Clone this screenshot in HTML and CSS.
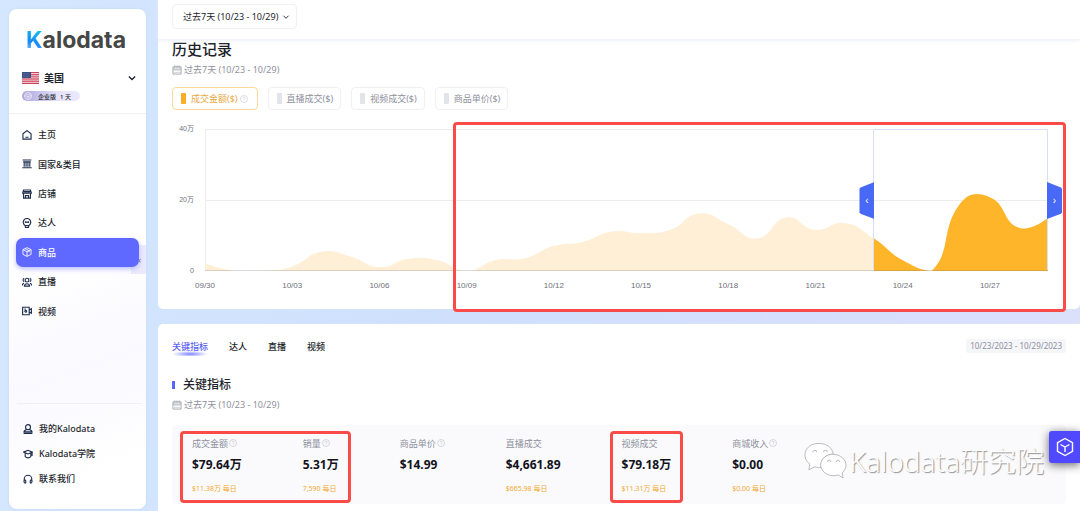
FILE: index.html
```html
<!DOCTYPE html>
<html lang="zh-CN">
<head>
    <meta charset="UTF-8">
    <meta name="viewport" content="width=device-width, initial-scale=1.0">
    <title>Kalodata</title>
    <link rel="stylesheet" href="styles.css">
</head>
<body>
    <svg class="defs" width="0" height="0">
        <symbol id="help" viewBox="0 0 16 16"><circle cx="8" cy="8" r="7"/><path d="M6 6.4a2 2 0 1 1 2.8 1.8c-.6.3-.8.6-.8 1.3M8 11.2v1"/></symbol>
        <symbol id="calendar" viewBox="0 0 16 16"><path d="M1.500 3h13v11.500h-13zM1.500 6.500h13M4.500 .8v3.500M8 .8v3.500M11.500 .8v3.500M4 9h1.500M7.200 9h1.500M10.500 9h1.500M4 12h1.500M7.200 12h1.500M10.500 12h1.500"/></symbol>
        <symbol id="chevron" viewBox="0 0 16 16"><path d="M3 5.500l5 5 5-5"/></symbol>
        <symbol id="box" viewBox="0 0 16 16"><path d="M8 1l6.500 3.200v7.600L8 15l-6.500-3.200V4.200zM1.500 4.200L8 7.500l6.500-3.300M8 7.500V15M4.800 2.600l6.500 3.300v2.600"/></symbol>
    </svg>

    <aside class="sidebar">
        <a class="logo" href="#"><span class="logo-k">K</span>alodata</a>
        <label class="country">
            <svg class="flag" viewBox="0 0 17 12">
                <rect width="17" height="12" fill="#f5e3e8"/>
                <path d="M0 .5h17M0 2.400h17M0 4.200h17M0 6.100h17M0 7.900h17M0 9.700h17M0 11.500h17" stroke="#cf4058"/>
                <rect width="9" height="6" fill="#3b4f84"/>
                <path d="M1 1.500h7M1 3h7M1 4.500h7" stroke="#8f9dc2" stroke-width=".5" stroke-dasharray=".6 .8"/>
            </svg>
            <select><option>美国</option></select>
            <svg class="icon chevron"><use href="#chevron"/></svg>
        </label>
        <div class="plan">
            <svg class="icon" viewBox="0 0 16 16"><circle cx="8" cy="8" r="7"/><path d="M4.500 5.500h7L13 8l-5 5-5-5zM6 8l2 2 2-2"/></svg>
            <span>企业版</span><span>1 天</span>
        </div>
        <nav class="nav">
            <a href="#"><svg class="icon" viewBox="0 0 16 16"><path d="M1.500 6L8 1l6.500 5v8.500h-13zM5.500 11.500h5"/></svg>主页</a>
            <a href="#"><svg class="icon" viewBox="0 0 16 16"><path d="M1 1.500h14M2 4.500h12M3.500 4.500v8M6.500 4.500v8M9.500 4.500v8M12.500 4.500v8M.5 14h15"/></svg>国家&amp;类目</a>
            <a href="#"><svg class="icon" viewBox="0 0 16 16"><path d="M2.500 1.500h11l1.500 5H1zM1 4h14M2.500 7.500v7h11v-7M5 4v3.500M8 4v3.500M11 4v3.500M5.500 14v-3.500h5V14"/></svg>店铺</a>
            <a href="#"><svg class="icon" viewBox="0 0 16 16"><path d="M5 12a6 6 0 1 1 6 0L10.500 15h-5zM5 12h6M5 6.500h6M5.500 5v3M10.500 5v3"/></svg>达人</a>
            <a class="active" href="#"><svg class="icon"><use href="#box"/></svg>商品</a>
            <a href="#"><svg class="icon" viewBox="0 0 16 16"><circle cx="8" cy="5" r="3"/><path d="M3.500 2a3 3 0 0 0 0 5.500M12.500 2a3 3 0 0 1 0 5.500M4 14.500c0-5 8-5 8 0zM.8 13.500c0-2 1-3.500 2.500-3.500M15.200 13.500c0-2-1-3.500-2.500-3.500"/></svg>直播</a>
            <a href="#"><svg class="icon" viewBox="0 0 16 16"><path d="M1 2h10.500v12H1zM11.500 6.500L15 4.500v7l-3.500-2M4 5h2"/><circle cx="6" cy="8.500" r="1.500"/></svg>视频</a>
        </nav>
        <nav class="nav-bottom">
            <a href="#"><svg class="icon" viewBox="0 0 16 16"><circle cx="8" cy="5" r="4"/><path d="M5.500 9C3 10 1.500 11.500 1.500 12.500h13C14.500 11.500 13 10 10.500 9M1 15h14"/></svg>我的Kalodata</a>
            <a href="#"><svg class="icon" viewBox="0 0 16 16"><path d="M.8 5L8 2l7.200 3L8 8zM3.500 6.500V12c2 3 7 3 9 0V6.500M14.500 5.500V11"/></svg>Kalodata学院</a>
            <a href="#"><svg class="icon" viewBox="0 0 16 16"><path d="M2 11V8a6 6 0 0 1 12 0v3M2 9.500c3-1 3 5 1.500 5S1 12 2 9.500zM14 9.500c-3-1-3 5-1.500 5S15 12 14 9.500z"/></svg>联系我们</a>
        </nav>
        <button class="collapse" aria-label="收起">‹</button>
    </aside>

    <main class="main">
        <header class="topbar">
            <label class="range">
                <select><option>过去7天 (10/23 - 10/29)</option></select>
                <svg class="icon chevron"><use href="#chevron"/></svg>
            </label>
        </header>

        <section class="card history">
            <h2>历史记录</h2>
            <p class="period"><svg class="icon"><use href="#calendar"/></svg>过去7天 (10/23 - 10/29)</p>
            <div class="series">
                <button class="on"><i></i>成交金额($)<svg class="icon"><use href="#help"/></svg></button>
                <button><i></i>直播成交($)</button>
                <button><i></i>视频成交($)</button>
                <button><i></i>商品单价($)</button>
            </div>
            <div class="chart">
                <div class="y-axis"><span>40万</span><span>20万</span><span>0</span></div>
                <div class="plot-col">
                    <div class="plot">
                        <svg id="plot" viewBox="0 0 843 142" preserveAspectRatio="none">
                            <clipPath id="picked"><rect x="669" y="0" width="174" height="142"/></clipPath>
                            <path class="grid" d="M-5 .5H843M-5 71.500H843M.5 0V142"/>
                            <path class="area" id="area"/>
                            <path class="area-picked" id="areaPicked" clip-path="url(#picked)"/>
                            <path class="axis" d="M-5 141.500H843"/>
                        </svg>
                        <div class="brush">
                            <button class="handle left" aria-label="开始">‹</button>
                            <button class="handle right" aria-label="结束">›</button>
                        </div>
                    </div>
                    <div class="x-axis">
                        <span>09/30</span><span>10/03</span><span>10/06</span><span>10/09</span><span>10/12</span><span>10/15</span><span>10/18</span><span>10/21</span><span>10/24</span><span>10/27</span>
                    </div>
                    <div class="mark"></div>
                </div>
            </div>
        </section>

        <section class="card detail">
            <div class="tabs">
                <button class="on">关键指标</button>
                <button>达人</button>
                <button>直播</button>
                <button>视频</button>
                <span class="dates">10/23/2023 - 10/29/2023</span>
            </div>
            <h3>关键指标</h3>
            <p class="period"><svg class="icon"><use href="#calendar"/></svg>过去7天 (10/23 - 10/29)</p>
            <div class="metrics">
                <div class="group">
                    <div class="metric"><span>成交金额<svg class="icon"><use href="#help"/></svg></span><b>$79.64万</b><small>$11.38万 每日</small></div>
                    <div class="metric"><span>销量<svg class="icon"><use href="#help"/></svg></span><b>5.31万</b><small>7,590 每日</small></div>
                    <div class="mark"></div>
                </div>
                <div class="metric"><span>商品单价<svg class="icon"><use href="#help"/></svg></span><b>$14.99</b></div>
                <div class="metric"><span>直播成交</span><b>$4,661.89</b><small>$665.98 每日</small></div>
                <div class="group">
                    <div class="metric"><span>视频成交</span><b>$79.18万</b><small>$11.31万 每日</small></div>
                    <div class="mark"></div>
                </div>
                <div class="metric"><span>商城收入<svg class="icon"><use href="#help"/></svg></span><b>$0.00</b><small>$0.00 每日</small></div>
                <div class="watermark">
                    <svg viewBox="0 0 44 38">
                        <path d="M15 1C7 1 1 6 1 13c0 4 2 7 5 9l-1 6 6-3c2 .5 5 .8 7 .4C16 17 23 12 30 12 29 5 23 1 15 1z"/>
                        <path d="M30 12c-7 0-13 5-13 11s6 11 13 11c2 0 3 0 5-.7l5 3-1-5c2-2 4-5 4-8 0-6-6-11-13-11z"/>
                        <path d="M9 10a2 2 0 0 1 4 0M20 10a2 2 0 0 1 4 0M24 20a1.800 1.800 0 0 1 3.600 0M33 20a1.800 1.800 0 0 1 3.600 0"/>
                    </svg>
                    <span>Kalodata研究院</span>
                </div>
            </div>
        </section>
    </main>

    <button class="float-btn" aria-label="工具">
        <svg viewBox="0 0 20 20"><path d="M10 1.500l7.500 4.200v8.600L10 18.500l-7.500-4.200V5.700zM5.500 7.500L10 10l4.500-2.500M10 10v5"/></svg>
    </button>

    <script src="chart.js"></script>
</body>
</html>
```

FILE: styles.css
```css
* {
    box-sizing: border-box;
}
body {
    margin: 0;
    height: 100vh;
    overflow: hidden;
    display: flex;
    gap: 12px;
    padding-left: 9px;
    background: linear-gradient(90deg, #d4e7fe, #cfe0fc 40%, #dbe0fb);
    font-family: "Noto Sans", "Noto Sans CJK SC", sans-serif;
    font-size: 9px;
    color: #1d1f2b;
}
h2, h3, p {
    margin: 0;
}
a {
    color: inherit;
    text-decoration: none;
}
button, select {
    font: inherit;
    color: inherit;
    border: none;
    background: none;
    padding: 0;
    cursor: pointer;
}
select {
    appearance: none;
    width: 100%;
}
.defs {
    position: absolute;
}
.icon {
    width: 10px;
    height: 10px;
    flex: none;
    fill: none;
    stroke: currentColor;
    stroke-width: 1.5;
}

/* sidebar */
.sidebar {
    position: relative;
    flex: none;
    width: 137px;
    margin: 9px 0 2px;
    border-radius: 8px;
    background: linear-gradient(160deg, #fff 50%, #f9f9ff 70%, #fff 90%);
    box-shadow: 0 0 3px #c3d8f4;
    display: flex;
    flex-direction: column;
}
.logo {
    margin: 18px 17px 0;
    font: bold 23px/27px Inter, sans-serif;
    color: #454747;
}
.logo-k {
    background: linear-gradient(200deg, #08dbe0, #1787fb 60%, #a9cffc);
    background-clip: text;
    color: transparent;
}
.country {
    display: flex;
    align-items: center;
    gap: 5px;
    margin: 15px 9px 0 13px;
    height: 18px;
    font-size: 10px;
    font-weight: bold;
}
.country .chevron {
    stroke-width: 2;
}
.flag {
    flex: none;
    width: 17px;
    height: 12px;
}
.plan {
    display: flex;
    align-items: center;
    gap: 4px;
    width: 58px;
    height: 10px;
    margin: 4px 13px 12px;
    padding-left: 2px;
    border-radius: 5px;
    background: linear-gradient(90deg, #aaa5dc, #e5e2fa 60%, #ebe9fc);
    font-size: 6px;
    font-weight: 500;
}
.plan .icon {
    width: 8px;
    height: 8px;
    margin-right: 2px;
    color: #f3f2ff;
}
.nav {
    border-top: 1px solid #f0f1f5;
    padding: 6px 7px 0;
    display: grid;
    grid-auto-rows: 1fr;
    min-height: 213px;
}
.nav a, .nav-bottom a {
    display: flex;
    align-items: center;
    gap: 6px;
    padding-left: 6px;
    font-weight: 500;
}
.nav .icon, .nav-bottom .icon {
    color: #1e2d4d;
    stroke-width: 1.8;
}
.nav .active {
    color: #fff;
    background: #6069ff;
    border-radius: 7px;
    box-shadow: 0 2px 5px #b9bcff;
    z-index: 1;
}
.nav .active .icon {
    color: #fff;
    stroke-width: 1.4;
}
.nav-bottom {
    margin: auto 4px 18px 8px;
    border-top: 1px solid #eff0f5;
    padding-top: 12px;
}
.nav-bottom a {
    height: 25px;
}
.collapse {
    position: absolute;
    right: 0;
    top: 236px;
    width: 15px;
    height: 29px;
    text-align: right;
    padding-right: 5px;
    background: #eae9fd;
}

/* main column */
.main {
    flex: 1;
    min-width: 0;
    display: flex;
    flex-direction: column;
}
.topbar {
    position: relative;
    padding: 4px 14px 10px;
    background: #fff;
    box-shadow: 0 1px 4px #e6e9fb;
}
.range {
    display: inline-flex;
    align-items: center;
    gap: 3px;
    height: 25px;
    padding: 0 6px 0 10px;
    border: 1px solid #eff0f4;
    border-radius: 4px;
    vertical-align: top;
}
.range .icon {
    width: 8px;
    height: 8px;
    stroke-width: 1.8;
}
.card {
    padding: 0 14px;
    background: #fff;
}
.history {
    padding-bottom: 18px;
    border-radius: 0 0 5px 5px;
}
h2 {
    font-size: 15px;
    line-height: 21px;
    font-weight: 500;
}
.period {
    display: flex;
    align-items: center;
    gap: 2px;
    height: 19px;
    color: #8e909c;
}
.period .icon {
    stroke-width: 1.2;
}
.series {
    display: flex;
    gap: 10px;
    margin-top: 8px;
    color: #8e909c;
}
.series button {
    display: flex;
    align-items: center;
    height: 23px;
    padding: 0 7px 0 8px;
    border: 1px solid #eff0f3;
    border-radius: 4px;
}
.series i {
    width: 5px;
    height: 11px;
    margin-right: 5px;
    border-radius: 1px;
    background: #e3e4ea;
}
.series .on {
    padding-right: 9px;
    color: #e9a944;
    border-color: #fbd998;
}
.series .on i {
    background: #fbae25;
}
.series .icon {
    width: 8px;
    height: 8px;
    margin-left: 2px;
    color: #c4c6ce;
    stroke-width: 1.2;
}

/* chart */
.chart {
    display: flex;
    gap: 11px;
    margin: 19px 18px 0 0;
    font: 8px/10px "Liberation Sans", "Noto Sans CJK SC", sans-serif;
    color: #6e7079;
}
.y-axis {
    width: 22px;
    height: 152px;
    margin-top: -5px;
    display: flex;
    flex-direction: column;
    justify-content: space-between;
    text-align: right;
    font-size: 7px;
}
.plot-col {
    position: relative;
    flex: 1;
}
.plot {
    position: relative;
    height: 142px;
}
.plot svg {
    display: block;
    width: 100%;
    height: 100%;
}
.grid, .axis {
    fill: none;
    stroke: #ececee;
}
.axis {
    stroke: #6e7079;
    stroke-opacity: .25;
}
.area {
    fill: #ffefd7;
}
.area-picked {
    fill: #ffb52a;
}
.brush {
    position: absolute;
    left: 79.3%;
    right: 0;
    top: 0;
    bottom: 0;
    border: 1px solid #d5defa;
    border-bottom-color: transparent;
    border-radius: 2px;
}
.handle {
    position: absolute;
    top: 52px;
    width: 15px;
    height: 37px;
    background: #4869f6;
    color: #fff;
    font-size: 10px;
}
.handle.left {
    right: 100%;
    clip-path: polygon(100% 0, 100% 100%, 1px 86%, 0 82%, 0 18%, 1px 15%);
}
.handle.right {
    left: 100%;
    clip-path: polygon(0 0, 14px 15%, 100% 18%, 100% 82%, 14px 86%, 0 100%);
}
/* one label every third day, the labels centred on their day */
.x-axis {
    display: grid;
    grid-template-columns: repeat(10, 1fr);
    margin: 10px 1.72% 0 -5.17%;
    text-align: center;
}
.mark {
    position: absolute;
    border: 3px solid #f94b48;
    border-radius: 4px;
    pointer-events: none;
}
.plot-col .mark {
    left: 29.4%;
    right: -18px;
    top: -7px;
    height: 190px;
}

/* detail */
.detail {
    flex: 1;
    min-height: 0;
    margin-top: 15px;
    border-radius: 5px 0 0 0;
}
.tabs {
    display: flex;
    align-items: center;
    gap: 21px;
    padding-top: 12px;
    height: 32px;
}
.tabs button {
    height: 20px;
    font-weight: 500;
}
.tabs .on {
    color: #5c61f6;
    background: radial-gradient(ellipse 50% 3px at 50% 18px, #7d85ff, #fff);
}
.dates {
    margin-left: auto;
    padding: 0 4px;
    font-size: 8px;
    line-height: 14px;
    color: #8e909c;
    background: #f5f6fa;
    border-radius: 2px;
}
h3 {
    display: flex;
    align-items: center;
    gap: 8px;
    margin-top: 19px;
    font-size: 12px;
    line-height: 20px;
    font-weight: 500;
}
h3::before {
    content: "";
    width: 3px;
    height: 8px;
    background: #5b66fb;
}
.metrics {
    position: relative;
    display: flex;
    gap: 61px;
    height: 79px;
    margin-top: 11px;
    padding: 11px 20px 0;
    background: #fafafc;
    border-radius: 4px;
}
.group {
    position: relative;
    display: flex;
    gap: 61px;
}
.metric {
    display: flex;
    flex-direction: column;
    white-space: nowrap;
}
.metric span {
    display: flex;
    align-items: center;
    height: 14px;
    color: #8e909c;
}
.metric .icon {
    width: 8px;
    height: 8px;
    margin-left: 1px;
    color: #b5b7c0;
    stroke-width: 1;
}
.metric b {
    font-size: 12px;
    line-height: 30px;
    color: #12131c;
}
.metric small {
    font-size: 7px;
    line-height: 17px;
    color: #f5a830;
}
.group .mark {
    top: -5px;
    left: -12px;
    right: -12px;
    height: 72px;
}
.watermark {
    position: absolute;
    right: 22px;
    top: 17px;
    display: flex;
    align-items: center;
    gap: 2px;
    font-size: 28px;
    line-height: 38px;
    font-weight: 300;
    color: #fff;
    text-shadow: 1px 1px 1px #909090;
}
.watermark svg {
    width: 43px;
    height: 38px;
    fill: #fff;
    stroke: #a9a9ab;
    stroke-width: .8;
}
.float-btn {
    position: fixed;
    right: 0;
    bottom: 48px;
    width: 31px;
    height: 32px;
    border-radius: 3px 0 0 3px;
    background: #5149ff;
    box-shadow: 0 2px 10px #66666a;
}
.float-btn svg {
    display: block;
    width: 20px;
    height: 20px;
    margin: auto;
    fill: none;
    stroke: #fff;
    stroke-width: 1.4;
}
```

FILE: chart.js
```js
// daily sales, 09/30 - 10/29, in 万
const sales = [2.2, 0.1, 0.1, 1.3, 5.4, 4.1, 1.1, 3.4, 3, 0, 3.1, 3.6, 7.1, 8.2, 11.1, 10.7, 11.6, 16.2, 13.2, 9.2, 15.1, 11.6, 13.5, 9.2, 3, 0, 19.2, 20.8, 12.2, 15];

const width = 843;
const height = 142;
const points = sales.map((v, i) => [i * width / (sales.length - 1), height - v / 40 * height]);

function smoothPath(pts, smooth) {
    let d = `M${pts[0]}`;
    let out = pts[0];
    for (let i = 1; i < pts.length; i++) {
        const prev = pts[i - 1];
        const p = pts[i];
        const next = pts[i + 1];
        let cpIn = p;
        let cpOut = p;
        if (next) {
            const lenPrev = Math.hypot(p[0] - prev[0], p[1] - prev[1]);
            const lenNext = Math.hypot(next[0] - p[0], next[1] - p[1]);
            const ratio = lenNext / (lenPrev + lenNext);
            const v = [next[0] - prev[0], next[1] - prev[1]];
            // never dip under the axis
            cpIn = [p[0] - v[0] * smooth * (1 - ratio), Math.min(height, p[1] - v[1] * smooth * (1 - ratio))];
            cpOut = [p[0] + v[0] * smooth * ratio, Math.min(height, p[1] + v[1] * smooth * ratio)];
        }
        d += `C${out} ${cpIn} ${p}`;
        out = cpOut;
    }
    return d;
}

const area = `${smoothPath(points, 0.5)}L${width} ${height}L0 ${height}Z`;
document.getElementById("area").setAttribute("d", area);
document.getElementById("areaPicked").setAttribute("d", area);
```
